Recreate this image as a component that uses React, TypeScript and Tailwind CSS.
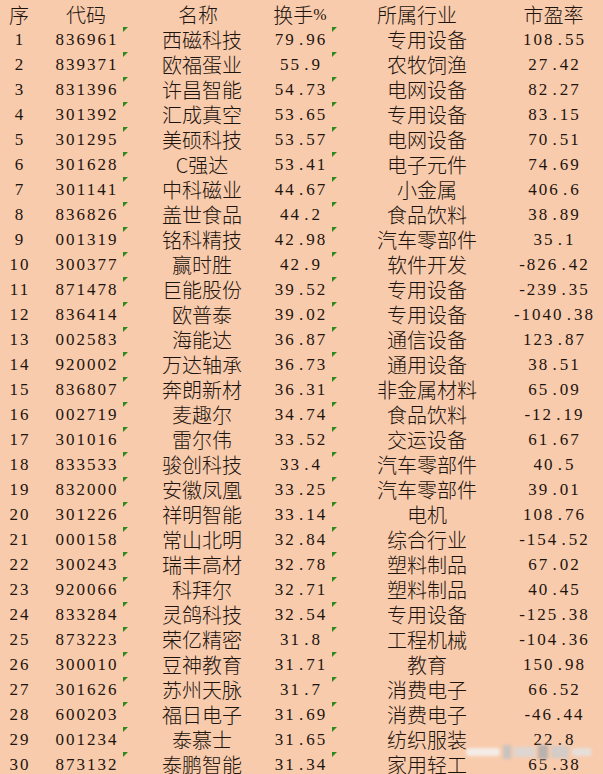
import React from "react";

type Row = [string, string, string, string, string, string];

const rows: Row[] = [
  ["1", "836961", "西磁科技", "79.96", "专用设备", "108.55"],
  ["2", "839371", "欧福蛋业", "55.9", "农牧饲渔", "27.42"],
  ["3", "831396", "许昌智能", "54.73", "电网设备", "82.27"],
  ["4", "301392", "汇成真空", "53.65", "专用设备", "83.15"],
  ["5", "301295", "美硕科技", "53.57", "电网设备", "70.51"],
  ["6", "301628", "C强达", "53.41", "电子元件", "74.69"],
  ["7", "301141", "中科磁业", "44.67", "小金属", "406.6"],
  ["8", "836826", "盖世食品", "44.2", "食品饮料", "38.89"],
  ["9", "001319", "铭科精技", "42.98", "汽车零部件", "35.1"],
  ["10", "300377", "赢时胜", "42.9", "软件开发", "-826.42"],
  ["11", "871478", "巨能股份", "39.52", "专用设备", "-239.35"],
  ["12", "836414", "欧普泰", "39.02", "专用设备", "-1040.38"],
  ["13", "002583", "海能达", "36.87", "通信设备", "123.87"],
  ["14", "920002", "万达轴承", "36.73", "通用设备", "38.51"],
  ["15", "836807", "奔朗新材", "36.31", "非金属材料", "65.09"],
  ["16", "002719", "麦趣尔", "34.74", "食品饮料", "-12.19"],
  ["17", "301016", "雷尔伟", "33.52", "交运设备", "61.67"],
  ["18", "833533", "骏创科技", "33.4", "汽车零部件", "40.5"],
  ["19", "832000", "安徽凤凰", "33.25", "汽车零部件", "39.01"],
  ["20", "301226", "祥明智能", "33.14", "电机", "108.76"],
  ["21", "000158", "常山北明", "32.84", "综合行业", "-154.52"],
  ["22", "300243", "瑞丰高材", "32.78", "塑料制品", "67.02"],
  ["23", "920066", "科拜尔", "32.71", "塑料制品", "40.45"],
  ["24", "833284", "灵鸽科技", "32.54", "专用设备", "-125.38"],
  ["25", "873223", "荣亿精密", "31.8", "工程机械", "-104.36"],
  ["26", "300010", "豆神教育", "31.71", "教育", "150.98"],
  ["27", "301626", "苏州天脉", "31.7", "消费电子", "66.52"],
  ["28", "600203", "福日电子", "31.69", "消费电子", "-46.44"],
  ["29", "001234", "泰慕士", "31.65", "纺织服装", "22.8"],
  ["30", "873132", "泰鹏智能", "31.34", "家用轻工", "65.38"],
];

const cjk = "font-['Noto_Sans_CJK_SC',sans-serif] text-[20px] leading-[25px] font-light";
const num = "font-['Liberation_Serif','Noto_Sans_CJK_SC',serif] text-[17px] leading-[25px] tracking-[2px]";

// SimSun-style half-width numbers: the dot takes a full digit cell
function Num({ value }: { value: string }) {
  const [a, b] = value.split(".");
  return (
    <span className={`${num} whitespace-nowrap`}>
      {a}
      {b !== undefined && (
        <>
          <span className="inline-block w-[10.5px] text-center tracking-normal">.</span>
          {b}
        </>
      )}
    </span>
  );
}

function Flag({ className }: { className: string }) {
  return (
    <svg className={`absolute top-[0px] h-[5px] w-[5px] ${className}`} viewBox="0 0 5 5">
      <polygon points="0,0 5,0 0,5" fill="#2c8a1c" />
    </svg>
  );
}

const cols = "grid grid-cols-[38px_96px_136px_60px_174px_99px] h-[25px] items-center";

export default function App() {
  return (
    <div className="relative h-[774px] w-[603px] overflow-hidden bg-[#f8cbad] pt-[2px] text-[#1d140e]">
      <div className={`${cols} ${cjk}`}>
        <div className="flex justify-center">序</div>
        <div className="flex justify-center">代码</div>
        <div className="flex justify-center pr-[8px]">名称</div>
        <div className="flex justify-center whitespace-nowrap">
          换手<span className="font-['Liberation_Serif',serif] text-[16px]">%</span>
        </div>
        <div className="flex justify-center">所属行业</div>
        <div className="flex justify-center">市盈率</div>
      </div>
      {rows.map((r) => (
        <div key={r[0]} className={`relative ${cols}`}>
          <Flag className="left-[123px]" />
          <Flag className="left-[332px]" />
          <div className="flex justify-center pl-[2px]">
            <Num value={r[0]} />
          </div>
          <div className="flex justify-center pl-[2px]">
            <Num value={r[1]} />
          </div>
          <div className={`flex justify-center whitespace-nowrap ${cjk}`}>{r[2]}</div>
          <div className="flex justify-center pl-[2px]">
            <Num value={r[3]} />
          </div>
          <div className={`flex justify-center whitespace-nowrap pl-[20px] ${cjk}`}>{r[4]}</div>
          <div className="flex justify-center pl-[2px]">
            <Num value={r[5]} />
          </div>
        </div>
      ))}
      {/* blurred site watermark */}
      <div className="absolute left-[466px] top-[744px] flex h-[16px] w-[126px] items-center gap-[3px] blur-[1.5px]">
        <div className="h-[8px] w-[34px] rounded-full bg-[#f4ece6]" />
        <div className="h-[14px] w-[8px] bg-[#c9c3bf]" />
        <div className="h-[10px] w-[22px] bg-[#ddd6d1]" />
        <div className="h-[14px] w-[10px] bg-[#b9b2ae]" />
        <div className="h-[12px] w-[18px] bg-[#d3ccc7]" />
        <div className="h-[8px] w-[20px] rounded-full bg-[#e6dfda]" />
      </div>
    </div>
  );
}
